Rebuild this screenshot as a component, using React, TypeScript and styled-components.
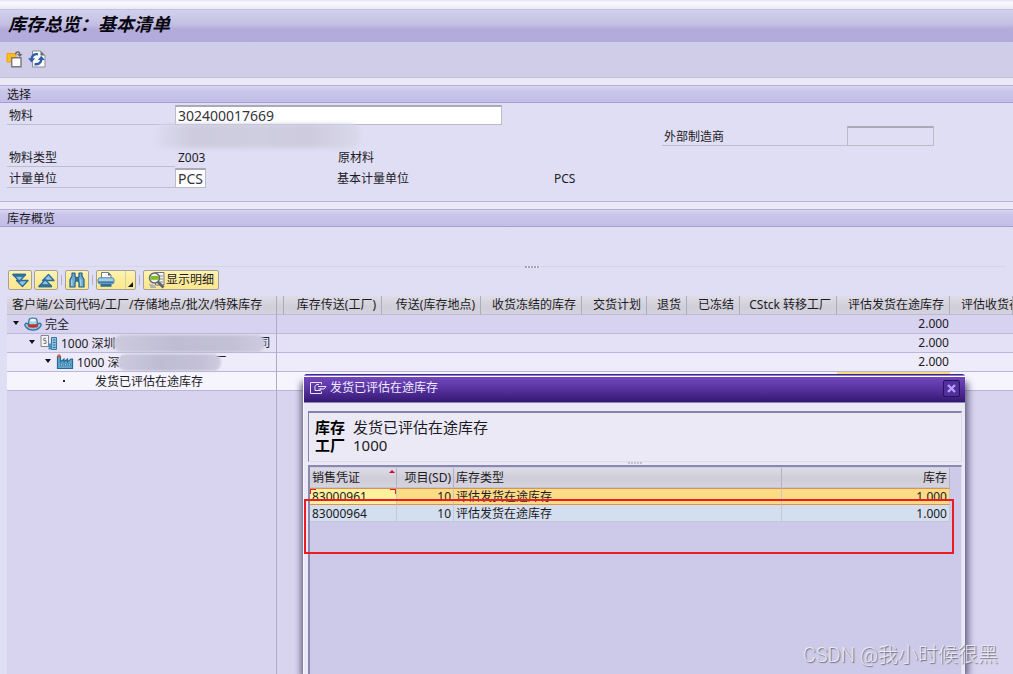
import React from "react";
import styled, { createGlobalStyle } from "styled-components";

const GlobalStyle = createGlobalStyle`
  * { box-sizing: border-box; }
  html, body { margin: 0; padding: 0; }
  body {
    font-family: "Noto Sans", "Noto Sans CJK SC", sans-serif;
    font-size: 12px;
    line-height: 18px;
    color: #1c1a24;
    background: #eae9f5;
  }
  button, input { font: inherit; color: inherit; margin: 0; }
`;

const Page = styled.main`
  position: relative;
  display: flex;
  flex-direction: column;
  min-height: 100vh;
  overflow: hidden;
`;

const MenuEdge = styled.div`
  height: 9px;
  background: linear-gradient(#e4e2f0, #fbfaff 30%, #e9e7f5);
`;

const TitleBar = styled.header`
  display: flex;
  align-items: center;
  height: 33px;
  padding: 0 8px 2px;
  border-top: 1px solid #c4c0dc;
  background: linear-gradient(#d3d0ec, #c3bfe3 45%, #b3acdb 60%, #b1aadb);
`;

const Title = styled.h1`
  margin: 0;
  font-family: "Liberation Serif", "Noto Sans CJK SC", serif;
  font-size: 18px;
  line-height: 24px;
  font-weight: 600;
  font-style: italic;
  color: #08060e;
`;

const AppToolbar = styled.nav`
  display: flex;
  align-items: center;
  gap: 5px;
  height: 36px;
  padding: 0 5px 2px;
  background: #cfcde8;
  border-bottom: 1px solid #c2bedf;
`;

const IconButton = styled.button`
  display: flex;
  padding: 0;
  border: 0;
  background: none;
`;

const Panel = styled.section<{ $grow?: boolean }>`
  display: flex;
  flex-direction: column;
  flex: ${(p) => (p.$grow ? "1 0 auto" : "none")};
  margin-top: 7px;
  background: #dfdef4;
  border-bottom: ${(p) => (p.$grow ? "0" : "1px solid #bab5e3")};
`;

const PanelHeading = styled.h2`
  margin: 0;
  height: 18px;
  padding: 0 7px;
  font-size: 12px;
  line-height: 17px;
  font-weight: 400;
  border-top: 1px solid #b5afde;
  border-bottom: 1px solid #a69ed4;
  background: linear-gradient(#d9d6f1, #c9c5ea 30%, #c3bee8);
`;

const Form = styled.form`
  position: relative;
  padding: 1px 7px 13px;
`;

const FormRow = styled.div<{ $indent?: boolean }>`
  display: flex;
  height: 21px;
  padding-left: ${(p) => (p.$indent ? "655px" : "0")};
`;

const FieldLabel = styled.label<{ $wide?: boolean }>`
  flex: none;
  width: ${(p) => (p.$wide ? "185px" : "168px")};
  padding: 3px 2px 0;
  line-height: 17px;
  border-bottom: 1px solid #bebdcd;
`;

const FieldInput = styled.input<{ $width: number; $locked?: boolean }>`
  width: ${(p) => p.$width}px;
  height: 20px;
  align-self: flex-end;
  padding: 0 2px 1px;
  font-size: 14px;
  line-height: 16px;
  color: #35333c;
  border: 1px solid #bcbbc4;
  border-top: 2px solid #aaa9b4;
  border-radius: 0;
  outline: 0;
  background: ${(p) => (p.$locked ? "transparent" : "#fff")};
`;

const FieldText = styled.span<{ $width: number }>`
  flex: none;
  width: ${(p) => p.$width}px;
  padding: 3px 3px 0;
  line-height: 17px;
`;

/* Soft strokes that hide private names */
const FormSmudge = styled.div`
  position: absolute;
  top: 21px;
  left: 156px;
  width: 205px;
  height: 24px;
  border-radius: 10px 16px 18px 8px;
  background: linear-gradient(90deg, #dddbf0, #cdcbdd 18%, #cfcde0 50%, #cdcbdd 75%, #dad9ea);
  filter: blur(2px);
`;

const Splitter = styled.div<{ $height: number }>`
  display: flex;
  flex: none;
  justify-content: center;
  align-items: flex-end;
  height: ${(p) => p.$height}px;
  margin: 0 7px;
  padding-left: 52px;
  background: linear-gradient(transparent calc(100% - 2px), #d6d5e8 0, #d6d5e8 calc(100% - 1px), transparent 0);
`;

const Grip = styled.span`
  width: 15px;
  height: 2px;
  background: repeating-linear-gradient(90deg, #a5a4b4 0 2px, #f3f2fb 2px 3px);
`;

const GridToolbar = styled.div`
  display: flex;
  align-items: center;
  gap: 2px;
  height: 28px;
  padding: 2px 8px 6px;
`;

const ToolButton = styled.button<{ $width: number }>`
  display: flex;
  flex: none;
  align-items: center;
  justify-content: center;
  gap: 1px;
  width: ${(p) => p.$width}px;
  height: 20px;
  padding: 0;
  line-height: 18px;
  border: 1px solid #a5a195;
  border-radius: 2px;
  background: linear-gradient(#fff3b5, #fdec9b 50%, #fbe78e);
`;

const ToolSeparator = styled.span`
  width: 1px;
  height: 10px;
  margin: 0 1px;
  background: #b3b1c4;
`;

const TreeArea = styled.div`
  display: flex;
  flex-direction: column;
  flex: 1;
  margin-left: 7px;
  background: #d8d4ef;
`;

const TreeTable = styled.table`
  width: 100%;
  table-layout: fixed;
  border-collapse: separate;
  border-spacing: 0;
`;

const TreeHead = styled.th<{ $left?: boolean }>`
  height: 19px;
  padding: ${(p) => (p.$left ? "0 0 0 5px" : "0 5px 0 0")};
  font-weight: 400;
  line-height: 18px;
  text-align: ${(p) => (p.$left ? "left" : "right")};
  white-space: nowrap;
  overflow: hidden;
  border-right: 1px solid #acaabb;
  border-bottom: 1px solid #bdbacf;
  background: linear-gradient(#dfdee8, #d0ced9 60%, #d4d2de);
`;

const LastHead = styled(TreeHead)`
  padding-left: 11px;
  text-align: left;
`;

const TreeRow = styled.tr<{ $shade: string }>`
  background: ${(p) => p.$shade};
`;

const TreeCell = styled.td<{ $marked?: boolean; $divided?: boolean }>`
  height: 19px;
  padding: 0 1px 0 0;
  text-align: right;
  line-height: 18px;
  border-bottom: 1px solid #bab5da;
  border-right: ${(p) => (p.$divided ? "1px solid #aeaac9" : "0")};
  background: ${(p) => (p.$marked ? "#f9da7c" : "transparent")};
`;

const Node = styled.div<{ $depth: number }>`
  display: flex;
  align-items: center;
  height: 18px;
  padding-left: ${(p) => p.$depth * 16 + 5}px;
  white-space: nowrap;
`;

const Caret = styled.span`
  flex: none;
  width: 0;
  height: 0;
  margin: 0 5px 2px 1px;
  border: 3px solid transparent;
  border-top: 4px solid #131019;
  border-bottom: 0;
`;

const Bullet = styled.span`
  width: 2px;
  height: 2px;
  margin: 0 27px 0 3px;
  background: #2b2834;
`;

const NodeText = styled.span`
  padding: 1px 0 0 3px;
`;

const NodeSmudge = styled.span<{ $width: number }>`
  flex: none;
  width: ${(p) => p.$width}px;
  height: 17px;
  margin: 0 -6px 0 -14px;
  z-index: 1;
  border-radius: 8px;
  background: linear-gradient(90deg, #cdcade, #bfbdd3 40%, #c4c1d6 80%, #cecbdf);
  filter: blur(1px);
`;

const TreeFiller = styled.div`
  flex: 1;
  width: 270px;
  border-right: 1px solid #aeaac9;
`;

const Dialog = styled.section`
  position: absolute;
  top: 374px;
  right: 48px;
  bottom: 0;
  left: 303px;
  display: flex;
  flex-direction: column;
  border-left: 1px solid #f6f5fc;
  border-radius: 3px 3px 0 0;
  background: #eae9f5;
  box-shadow: 5px 6px 7px -2px rgba(48, 42, 82, 0.7), -4px 6px 6px -2px rgba(48, 42, 82, 0.7);
`;

const DialogEdge = styled.div`
  height: 3px;
  border-bottom: 1px solid #fff;
  border-radius: 3px 3px 0 0;
  background: linear-gradient(#3e2a83 50%, #8d78cf 50%);
`;

const DialogBar = styled.header`
  display: flex;
  align-items: center;
  height: 26px;
  padding: 0 5px 3px 6px;
  gap: 3px;
  color: #f0ecff;
  border-bottom: 1px solid #8a84ae;
  background: linear-gradient(#7247bd, #5c37a5 40%, #3c1d7c 90%, #35176f);
`;

const DialogTitle = styled.h2`
  flex: 1;
  margin: 0;
  font-size: 12px;
  line-height: 18px;
  font-weight: 400;
`;

const CloseButton = styled.button`
  display: flex;
  align-items: center;
  justify-content: center;
  width: 17px;
  height: 17px;
  padding: 0;
  border: 1px solid #2a1160;
  border-radius: 2px;
  background: #50309a;
`;

const DialogBody = styled.div`
  display: flex;
  flex: 1;
  flex-direction: column;
  padding: 8px 3px 0 4px;
`;

const Facts = styled.dl`
  display: grid;
  grid-template-columns: 38px 1fr;
  align-content: start;
  height: 51px;
  margin: 0;
  padding: 5px 6px;
  font-size: 15px;
  line-height: 18px;
  border: 1px solid #dddcea;
  border-top: 2px solid #8583a6;
  border-left: 1px solid #8583a6;
`;

const FactName = styled.dt`
  font-weight: 700;
  color: #000;
`;

const FactValue = styled.dd`
  margin: 0;
`;

const DialogGrip = styled.div`
  display: flex;
  justify-content: center;
  height: 3px;
  opacity: 0.6;
`;

const ResultArea = styled.div`
  flex: 1;
  padding: 1px 11px 0 0;
  border-top: 2px solid #8b89ad;
  border-left: 2px solid #8b89ad;
  border-right: 1px solid #dddcea;
  background: #cdcae9;
`;

const ResultTable = styled.table`
  width: 100%;
  table-layout: fixed;
  border-collapse: separate;
  border-spacing: 0;
`;

const ResultHead = styled.th<{ $right?: boolean }>`
  position: relative;
  height: 20px;
  padding: 1px 2px 0 2px;
  font-weight: 400;
  text-align: ${(p) => (p.$right ? "right" : "left")};
  border-right: 1px solid #b3b1c2;
  border-bottom: 1px solid #c5c3d3;
  background: linear-gradient(#dddce6, #cfcdd8 55%, #d5d3de);
`;

const SortMark = styled.span`
  position: absolute;
  top: 2px;
  right: 1px;
  border: 3px solid transparent;
  border-top: 0;
  border-bottom: 3px solid #c3102c;
`;

const ResultRow = styled.tr<{ $selected?: boolean }>`
  background: ${(p) => (p.$selected ? "#fbdc84" : "#d3deee")};
  --line: ${(p) => (p.$selected ? "#dc9150" : "#c3c6d8")};
  --top: ${(p) => (p.$selected ? "1px" : "0")};
`;

const ResultCell = styled.td<{ $right?: boolean; $cursor?: boolean }>`
  height: 17px;
  padding: 0 2px;
  line-height: 15px;
  text-align: ${(p) => (p.$right ? "right" : "left")};
  border-top: var(--top) solid #dc9150;
  border-bottom: 1px solid var(--line);
  border-right: 1px solid #c9c6d0;
  background: ${(p) =>
    p.$cursor
      ? "linear-gradient(#e8202c, #e8202c) 0 0 / 6px 1px no-repeat, linear-gradient(#e8202c, #e8202c) 100% 0 / 6px 1px no-repeat, linear-gradient(#e8202c, #e8202c) 0 0 / 1px 5px no-repeat, linear-gradient(#e8202c, #e8202c) 100% 0 / 1px 5px no-repeat, #fff09c"
      : "transparent"};
`;

const RedFrame = styled.div`
  position: absolute;
  top: 125px;
  left: 0;
  right: 11px;
  height: 55px;
  border: 2px solid #ed1c24;
  pointer-events: none;
`;

const Watermark = styled.div`
  position: absolute;
  right: 15px;
  bottom: 5px;
  font-family: Roboto, "Noto Sans CJK SC", sans-serif;
  font-size: 20px;
  font-weight: 300;
  line-height: 28px;
  color: rgba(240, 239, 248, 0.9);
  text-shadow: 1px 1px 1px #6f6d7c;
`;

const VariantIcon = () => (
  <svg width="18" height="18" viewBox="0 0 18 18" fill="none">
    <path d="M2 3.500h9v8.500H2z" fill="#ffbd19" stroke="#f29f14" />
    <path d="M6.700 7.700h9.300v9H6.700z" fill="#fff" stroke="#77777d" strokeWidth="1.400" />
    <path d="M10.500 4.500q.5-3 3-2.500 1.500.5 1.300 3" stroke="#67676d" strokeWidth="1.400" />
    <path d="M12 4h5.500l-2.700 3z" fill="#67676d" />
  </svg>
);

const RefreshIcon = () => (
  <svg width="18" height="18" viewBox="0 0 18 18" fill="none">
    <path d="M4.500 1h8l4.500 4.500V17H4.500z" fill="#fbfbfd" stroke="#8d8d95" />
    <path d="M12.500 1v4.500H17z" fill="#68686f" />
    <path d="M10 4.300C6.500 3.500 3.800 5.500 3.600 9" stroke="#2f5fa8" strokeWidth="2.400" />
    <path d="M0 8.200h7.200L3.600 12.400z" fill="#2f5fa8" />
    <path d="M6.500 14.200c4 .6 6.700-1.400 6.900-5.200" stroke="#2f5fa8" strokeWidth="2.400" />
    <path d="M9.800 10h7l-3.500-4.200z" fill="#2f5fa8" />
  </svg>
);

const ExpandIcon = ({ up }: { up?: boolean }) => (
  <svg width="17" height="15" viewBox="0 0 17 15">
    <g
      fill="#8ec5e4"
      stroke="#2d6c97"
      strokeWidth="1.300"
      strokeLinejoin="round"
      transform={up ? "matrix(1 0 0 -1 0 15)" : undefined}
    >
      <path d="M4.500 7.500H16L10.500 13.500z" />
      <path d="M1 1.500h12.500L7.300 8.500z" />
      <path d="M1 1.500h12.500l-1.500 1.700H2.500z" fill="#3b83b1" />
    </g>
  </svg>
);

const BinocularsIcon = () => (
  <svg width="18" height="18" viewBox="0 0 18 18">
    <g fill="#70abcf" stroke="#235f88" strokeWidth="1.200" strokeLinejoin="round">
      <path d="M4 2h3v3.500l1 1V10L7 11.500V16H2V8.500L4 5z" />
      <path d="M14 2h-3v3.500l-1 1V10l1 1.500V16h5V8.500L14 5z" />
      <path d="M8 6.500h2V10H8z" fill="#4a8db5" />
    </g>
    <path d="M3.800 8.500V15M12.800 8.500V15" stroke="#b7dcef" />
  </svg>
);

const PrintIcon = () => (
  <svg width="38" height="18" viewBox="0 0 38 18">
    <path d="M4.500 7V1.500h7L14 4v3" fill="#fff" stroke="#747d87" />
    <path d="M11 1.500V4.500h3z" fill="#5c6670" />
    <rect x="1" y="6.800" width="16" height="6" rx="2" fill="#a5cfe6" stroke="#4b86ab" />
    <path d="M1.500 10.300h15v1.700h-15z" fill="#3f7da5" />
    <path d="M3.500 13h11v2.800h-11z" fill="#2f6f99" />
    <path d="M28.500 0v18" stroke="#cfd69c" />
    <path d="M36 11v5h-5z" fill="#16131b" />
  </svg>
);

const DetailIcon = () => (
  <svg width="17" height="17" viewBox="0 0 17 17">
    <path d="M7.500.5H16v12.500H7.500z" fill="#f5f5f3" stroke="#777" />
    <path d="M9 4h6M12 7h3M12 10h3" stroke="#888" />
    <path d="M9.500 9.500l6 6" stroke="#62626a" strokeWidth="2.800" />
    <circle cx="6.500" cy="6" r="5" fill="#eef5e6" stroke="#66666d" strokeWidth="1.500" />
    <path d="M2.500 4h8.500v3.800H2.500z" fill="#7ebb2e" />
    <path d="M1 11.500l1.500 4.500h6l-2-3z" fill="#b2b2b2" />
  </svg>
);

const ClientIcon = () => (
  <svg width="18" height="15" viewBox="0 0 18 15">
    <path
      d="M1.500 6.500q-1.500 1.500.5 3.700 2.500 3 7 3t7-3q2-2.200.5-3.700-1-1-2.500.5h-10q-1.500-1.500-2.500-.5z"
      fill="#8fc3df"
      stroke="#2f6f99"
      strokeWidth="1.200"
    />
    <path d="M4.500 8L5 2.800Q5.500 1 9 1t4 1.800l.5 5.200z" fill="#a9d3ea" stroke="#2f6f99" strokeWidth="1.200" />
    <ellipse cx="9" cy="3.200" rx="3" ry="1.200" fill="#f2fafe" />
    <path d="M4.200 7q4.800 1 9.600 0v3q-4.800 1.400-9.600 0z" fill="#c6322b" />
  </svg>
);

const CompanyIcon = () => (
  <svg width="18" height="16" viewBox="0 0 18 16">
    <path d="M1 .5h7.500v11H1z" fill="#f5f5f6" stroke="#84848c" />
    <path d="M6 3.300H3.800v2.300H6v2.800H3.500" fill="none" stroke="#77777f" />
    <path d="M11.500 2.500h5v12h-5z" fill="#8cc3e0" stroke="#347aa4" />
    <path d="M8.500 8.500h3v6h-3z" fill="#4a90b9" />
    <path d="M13 5h2.500M13 7.500h2.500M13 10h2.500M13 12.500h2.500" stroke="#2f7098" />
  </svg>
);

const PlantIcon = () => (
  <svg width="18" height="16" viewBox="0 0 18 16">
    <path d="M1.500 14.500v-12h3V8l3.500-3v3l3.500-3v3L15 5h1.500v9.500z" fill="#5da7cf" stroke="#28698f" strokeWidth="1.200" />
    <path d="M1.500.5h3v3h-3z" fill="#d9533d" />
    <path d="M4.500 9.800h2v2h-2zM8.500 9.800h2v2h-2zM12.500 9.800h2v2h-2z" fill="#d5edf8" stroke="#28698f" strokeWidth=".7" />
  </svg>
);

const WindowIcon = () => (
  <svg width="17" height="14" viewBox="0 0 17 14" fill="none" stroke="#e9e2ff">
    <path d="M11.500 3.500v-2h-11v11h11v-2" />
    <path d="M9 3.500H6.500l-1.500 2V9.500h5.500l.5-2.500M8 5.500h8L14 8H8.500" />
  </svg>
);

const columns = [
  { text: "", width: 7 },
  { text: "库存传送(工厂)", width: 98 },
  { text: "传送(库存地点)", width: 99 },
  { text: "收货冻结的库存", width: 101 },
  { text: "交货计划", width: 65 },
  { text: "退货", width: 40 },
  { text: "已冻结", width: 53 },
  { text: "CStck 转移工厂", width: 97 },
  { text: "评估发货在途库存", width: 113 },
];

const treeRows = [
  {
    shade: "#d6d2ef",
    total: "2.000",
    node: (
      <Node $depth={0}>
        <Caret />
        <ClientIcon />
        <NodeText>完全</NodeText>
      </Node>
    ),
  },
  {
    shade: "#e4e1f6",
    total: "2.000",
    node: (
      <Node $depth={1}>
        <Caret />
        <CompanyIcon />
        <NodeText>1000 深圳市</NodeText>
        <NodeSmudge $width={151} />
        <span>司</span>
      </Node>
    ),
  },
  {
    shade: "#eeecfa",
    total: "2.000",
    node: (
      <Node $depth={2}>
        <Caret />
        <PlantIcon />
        <NodeText>1000 深圳</NodeText>
        <NodeSmudge $width={103} />
        <span>厂</span>
      </Node>
    ),
  },
  {
    shade: "#f6f5fe",
    total: "",
    node: (
      <Node $depth={3}>
        <Bullet />
        <NodeText as="span">发货已评估在途库存</NodeText>
      </Node>
    ),
  },
];

const results = [
  { doc: "83000961", item: "10", type: "评估发货在途库存", stock: "1.000" },
  { doc: "83000964", item: "10", type: "评估发货在途库存", stock: "1.000" },
];

export default function App() {
  return (
    <Page>
      <GlobalStyle />
      <MenuEdge />
      <TitleBar>
        <Title>库存总览：基本清单</Title>
      </TitleBar>
      <AppToolbar>
        <IconButton aria-label="选择变式"><VariantIcon /></IconButton>
        <IconButton aria-label="刷新"><RefreshIcon /></IconButton>
      </AppToolbar>

      <Panel>
        <PanelHeading>选择</PanelHeading>
        <Form>
          <FormRow>
            <FieldLabel htmlFor="material">物料</FieldLabel>
            <FieldInput id="material" $width={327} defaultValue="302400017669" />
          </FormRow>
          <FormRow $indent>
            <FieldLabel htmlFor="maker" $wide>外部制造商</FieldLabel>
            <FieldInput id="maker" $width={87} $locked readOnly />
          </FormRow>
          <FormRow>
            <FieldLabel as="span">物料类型</FieldLabel>
            <FieldText $width={160}>Z003</FieldText>
            <FieldText $width={217}>原材料</FieldText>
          </FormRow>
          <FormRow>
            <FieldLabel htmlFor="unit">计量单位</FieldLabel>
            <FieldInput id="unit" $width={31} defaultValue="PCS" />
            <FieldText $width={128} />
            <FieldText $width={217}>基本计量单位</FieldText>
            <FieldText $width={60}>PCS</FieldText>
          </FormRow>
          <FormSmudge />
        </Form>
      </Panel>

      <Panel $grow>
        <PanelHeading>库存概览</PanelHeading>
        <Splitter $height={41}><Grip /></Splitter>
        <GridToolbar>
          <ToolButton $width={24} aria-label="展开"><ExpandIcon /></ToolButton>
          <ToolButton $width={24} aria-label="折叠"><ExpandIcon up /></ToolButton>
          <ToolSeparator />
          <ToolButton $width={24} aria-label="查找"><BinocularsIcon /></ToolButton>
          <ToolSeparator />
          <ToolButton $width={40} aria-label="打印"><PrintIcon /></ToolButton>
          <ToolSeparator />
          <ToolButton $width={76}><DetailIcon />显示明细</ToolButton>
        </GridToolbar>
        <TreeArea>
          <TreeTable>
            <colgroup>
              <col width={270} />
              {columns.map((c, i) => <col key={i} width={c.width} />)}
              <col />
            </colgroup>
            <thead>
              <tr>
                <TreeHead $left>客户端/公司代码/工厂/存储地点/批次/特殊库存</TreeHead>
                {columns.map((c, i) => <TreeHead key={i}>{c.text}</TreeHead>)}
                <LastHead>评估收货在途库存</LastHead>
              </tr>
            </thead>
            <tbody>
              {treeRows.map((row, i) => (
                <TreeRow key={i} $shade={row.shade}>
                  <TreeCell $divided>{row.node}</TreeCell>
                  <TreeCell colSpan={8} />
                  <TreeCell $marked={i === 3}>{row.total}</TreeCell>
                  <TreeCell />
                </TreeRow>
              ))}
            </tbody>
          </TreeTable>
          <TreeFiller />
        </TreeArea>
      </Panel>

      <Dialog role="dialog" aria-labelledby="dialog-title">
        <DialogEdge />
        <DialogBar>
          <WindowIcon />
          <DialogTitle id="dialog-title">发货已评估在途库存</DialogTitle>
          <CloseButton aria-label="关闭">
            <svg width="9" height="9" viewBox="0 0 9 9">
              <path d="M1 1l7 7M8 1L1 8" stroke="#bd9cff" strokeWidth="2.400" />
            </svg>
          </CloseButton>
        </DialogBar>
        <DialogBody>
          <Facts>
            <FactName>库存</FactName>
            <FactValue>发货已评估在途库存</FactValue>
            <FactName>工厂</FactName>
            <FactValue>1000</FactValue>
          </Facts>
          <DialogGrip><Grip /></DialogGrip>
          <ResultArea>
            <ResultTable>
              <colgroup>
                <col width={87} />
                <col width={57} />
                <col />
                <col width={168} />
              </colgroup>
              <thead>
                <tr>
                  <ResultHead>销售凭证<SortMark /></ResultHead>
                  <ResultHead $right>项目(SD)</ResultHead>
                  <ResultHead>库存类型</ResultHead>
                  <ResultHead $right>库存</ResultHead>
                </tr>
              </thead>
              <tbody>
                {results.map((r, i) => (
                  <ResultRow key={r.doc} $selected={i === 0}>
                    <ResultCell $cursor={i === 0}>{r.doc}</ResultCell>
                    <ResultCell $right>{r.item}</ResultCell>
                    <ResultCell>{r.type}</ResultCell>
                    <ResultCell $right>{r.stock}</ResultCell>
                  </ResultRow>
                ))}
              </tbody>
            </ResultTable>
          </ResultArea>
        </DialogBody>
        <RedFrame />
      </Dialog>
      <Watermark>CSDN @我小时候很黑</Watermark>
    </Page>
  );
}
